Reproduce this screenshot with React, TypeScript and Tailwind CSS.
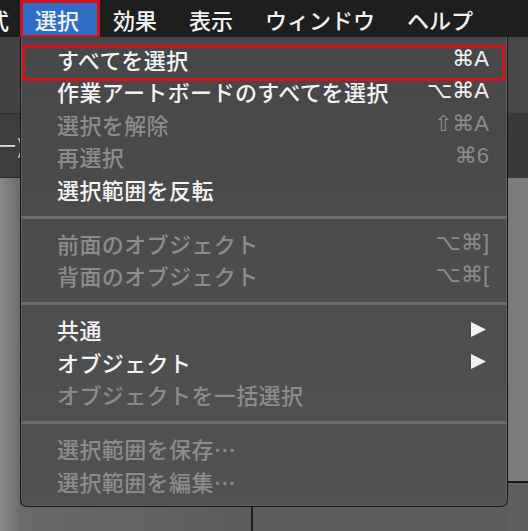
import React from "react";

const jp = { fontFamily: "'Noto Sans CJK JP', 'Noto Sans', sans-serif" };
const scFont = { fontFamily: "'Liberation Sans', 'DejaVu Sans', sans-serif" };

type Item = { label: string; sc?: string; disabled?: boolean; sub?: boolean; sel?: boolean };

const sections: Item[][] = [
  [
    { label: "すべてを選択", sc: "⌘A", sel: true },
    { label: "作業アートボードのすべてを選択", sc: "⌥⌘A" },
    { label: "選択を解除", sc: "⇧⌘A", disabled: true },
    { label: "再選択", sc: "⌘6", disabled: true },
    { label: "選択範囲を反転" },
  ],
  [
    { label: "前面のオブジェクト", sc: "⌥⌘]", disabled: true },
    { label: "背面のオブジェクト", sc: "⌥⌘[", disabled: true },
  ],
  [
    { label: "共通", sub: true },
    { label: "オブジェクト", sub: true },
    { label: "オブジェクトを一括選択", disabled: true },
  ],
  [
    { label: "選択範囲を保存…", disabled: true },
    { label: "選択範囲を編集…", disabled: true },
  ],
];

function Arrow() {
  return (
    <svg width="15" height="15" viewBox="0 0 15 15" className="mr-[3px]">
      <path d="M0 0 L15 7.5 L0 15 Z" fill="#f2f2f2" />
    </svg>
  );
}

function Row({ item }: { item: Item }) {
  const color = item.disabled ? "text-[#8c8c8c]" : "text-[#f4f4f4]";
  return (
    <div className={`relative flex h-[32.5px] items-center justify-between pb-[3px] pl-[36px] pr-[18px] ${color}`}>
      {item.sel && (
        <div className="absolute left-[1px] right-[2px] top-[1px] h-[36px] border-[3px] border-[#d4121c]" />
      )}
      <span className="whitespace-nowrap text-[22px] font-medium leading-none tracking-[0.4px]" style={jp}>
        {item.label}
      </span>
      {item.sc && (
        <span className="text-[22px] leading-none" style={scFont}>
          {item.sc}
        </span>
      )}
      {item.sub && <Arrow />}
    </div>
  );
}

function Separator() {
  return (
    <div className="flex h-[21.5px] flex-col justify-center">
      <div className="h-[3px] bg-[#6d6d6d]" />
    </div>
  );
}

export default function App() {
  return (
    <div className="relative h-[531px] w-[528px] overflow-hidden bg-[#5e5e5e]" style={jp}>
      {/* menu bar */}
      <div className="flex h-[37px] items-stretch bg-[#1e1e1e] text-[22px] font-medium leading-none text-[#f2f2f2]">
        <div className="flex w-[20px] shrink-0 items-center overflow-hidden">
          <span className="-ml-[35px] shrink-0 whitespace-nowrap">書式</span>
        </div>
        <div className="relative ml-[3px] flex w-[74px] shrink-0 items-center bg-[#2f6ec6] pl-[12px]">
          <span>選択</span>
          <div className="absolute -left-[3px] -right-[3px] top-0 h-[38px] border-[3px] border-[#d4121c]" />
        </div>
        <div className="flex items-center gap-[32px] pl-[16px]">
          <span>効果</span>
          <span>表示</span>
          <span>ウィンドウ</span>
          <span>ヘルプ</span>
        </div>
      </div>

      {/* background panels */}
      <div className="flex h-[494px]">
        <div className="flex w-[20px] flex-col">
          <div className="h-[76px] bg-[#424242]" />
          <div className="h-[1px] bg-[#2c2c2c]" />
          <div className="flex h-[63px] items-center overflow-hidden bg-[#3d3d3d] text-[20px] leading-none text-[#dcdcdc]">
            <span className="-ml-[3px] shrink-0 whitespace-nowrap">ー)</span>
          </div>
          <div className="h-[1px] bg-[#2c2c2c]" />
          <div className="flex-1 bg-gradient-to-r from-[#8a8a8a] to-[#6c6c6c]" />
        </div>
        <div className="flex flex-1 flex-col">
          <div className="flex-1 bg-[#555555]" />
          <div className="flex h-[25px]">
            <div className="w-[233px] border-r-2 border-[#1c1c1c] bg-gradient-to-r from-[#6a6a6a] to-[#5c5c5c]" />
            <div className="flex-1 bg-[#5d5d5d]" />
          </div>
        </div>
        <div className="flex w-[20px] flex-col">
          <div className="h-[76px] bg-[#474747]" />
          <div className="h-[65px] bg-[#3a3a3a]" />
          <div className="h-[303px] bg-[#7b7b7b]" />
          <div className="h-[2px] bg-[#1a1a1a]" />
          <div className="flex-1 bg-[#5f5f5f]" />
        </div>
      </div>

      {/* dropdown menu */}
      <div className="absolute left-[20px] top-[37px] w-[488px] rounded-b-[7px] border border-t-0 border-[#161616] bg-gradient-to-b from-[#474747] to-[#525252] pb-[7px] pt-[7px] shadow-[inset_1px_0_0_#5f5f5f,inset_-1px_0_0_#5f5f5f,inset_0_-1px_0_#5f5f5f]">
        {sections.map((sec, i) => (
          <div key={i}>
            {i > 0 && <Separator />}
            {sec.map((it) => (
              <Row key={it.label} item={it} />
            ))}
          </div>
        ))}
      </div>
    </div>
  );
}
